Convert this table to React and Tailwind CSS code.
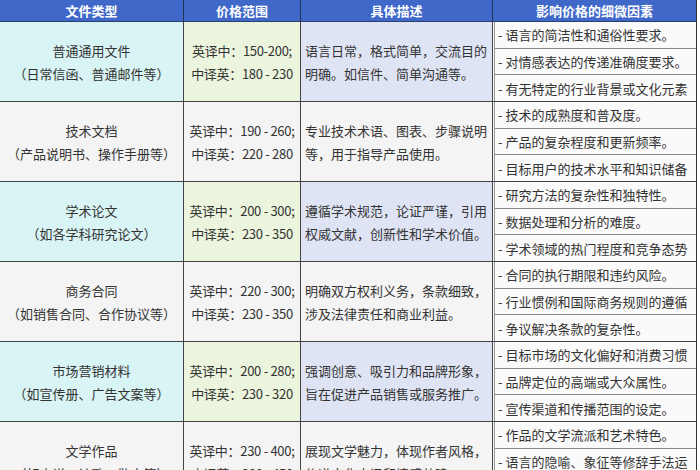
import React from "react";

const rows = [
  {
    t: ["普通通用文件", "（日常信函、普通邮件等）"],
    p: ["英译中：150-200;", "中译英：180 - 230"],
    d: ["语言日常，格式简单，交流目的", "明确。如信件、简单沟通等。"],
    f: ["- 语言的简洁性和通俗性要求。", "- 对情感表达的传递准确度要求。", "- 有无特定的行业背景或文化元素"],
  },
  {
    t: ["技术文档", "（产品说明书、操作手册等）"],
    p: ["英译中：190 - 260;", "中译英：220 - 280"],
    d: ["专业技术术语、图表、步骤说明", "等，用于指导产品使用。"],
    f: ["- 技术的成熟度和普及度。", "- 产品的复杂程度和更新频率。", "- 目标用户的技术水平和知识储备"],
  },
  {
    t: ["学术论文", "（如各学科研究论文）"],
    p: ["英译中：200 - 300;", "中译英：230 - 350"],
    d: ["遵循学术规范，论证严谨，引用", "权威文献，创新性和学术价值。"],
    f: ["- 研究方法的复杂性和独特性。", "- 数据处理和分析的难度。", "- 学术领域的热门程度和竞争态势"],
  },
  {
    t: ["商务合同", "（如销售合同、合作协议等）"],
    p: ["英译中：220 - 300;", "中译英：230 - 350"],
    d: ["明确双方权利义务，条款细致，", "涉及法律责任和商业利益。"],
    f: ["- 合同的执行期限和违约风险。", "- 行业惯例和国际商务规则的遵循", "- 争议解决条款的复杂性。"],
  },
  {
    t: ["市场营销材料", "（如宣传册、广告文案等）"],
    p: ["英译中：200 - 280;", "中译英：230 - 320"],
    d: ["强调创意、吸引力和品牌形象，", "旨在促进产品销售或服务推广。"],
    f: ["- 目标市场的文化偏好和消费习惯", "- 品牌定位的高端或大众属性。", "- 宣传渠道和传播范围的设定。"],
  },
  {
    t: ["文学作品", "（如小说、诗歌、散文等）"],
    p: ["英译中：230 - 400;", "中译英：280 - 450"],
    d: ["展现文学魅力，体现作者风格，", "传递文化内涵和情感共鸣。"],
    f: ["- 作品的文学流派和艺术特色。", "- 语言的隐喻、象征等修辞手法运", "- 文化背景的差异和转换难度。"],
  },
];

export default function App() {
  return (
    <div
      className="w-[700px] h-[470px] overflow-hidden bg-white text-[13px] text-[#333]"
      style={{ fontFamily: '"Noto Sans CJK SC", "Noto Sans", sans-serif' }}
    >
      <div className="w-[697px] border-r border-[#333]">
        <div className="flex h-[22px] bg-[#3f68c8] text-white font-bold border-b border-[#2a3f70] leading-[21px]">
          <div className="w-[184px] text-center border-r border-[#223455]">文件类型</div>
          <div className="w-[117px] text-center border-r border-[#223455]">价格范围</div>
          <div className="w-[192px] text-center border-r border-[#223455]">具体描述</div>
          <div className="flex-1 text-center">影响价格的细微因素</div>
        </div>
        {rows.map((r, i) => {
          const odd = i % 2 === 0;
          return (
            <div key={i} className="flex h-[80px] border-b border-[#444] leading-[23px]">
              <div
                className={`w-[184px] flex flex-col items-center justify-center border-r border-[#444] ${odd ? "bg-[#d9f4f4]" : "bg-[#f4f4f4]"}`}
              >
                <div>{r.t[0]}</div>
                <div>{r.t[1]}</div>
              </div>
              <div
                className={`w-[117px] flex flex-col items-center justify-center border-r border-[#444] whitespace-nowrap tracking-[-0.3px] ${odd ? "bg-[#ebf4dc]" : "bg-[#f4f4f4]"}`}
              >
                <div>{r.p[0]}</div>
                <div>{r.p[1]}</div>
              </div>
              <div
                className={`w-[192px] flex flex-col justify-center pl-[4px] border-r border-[#444] whitespace-nowrap ${odd ? "bg-[#dfe4f4]" : "bg-[#f4f4f4]"}`}
              >
                <div>{r.d[0]}</div>
                <div>{r.d[1]}</div>
              </div>
              <div className="flex-1 flex flex-col bg-[#fafafa] pl-[1px]">
                {r.f.map((x, j) => (
                  <div
                    key={j}
                    className={`flex-1 flex items-center pl-[3px] border-l border-[#999] whitespace-nowrap overflow-hidden ${j < 2 ? "border-b" : ""} border-b-[#888]`}
                  >
                    {x}
                  </div>
                ))}
              </div>
            </div>
          );
        })}
      </div>
    </div>
  );
}
